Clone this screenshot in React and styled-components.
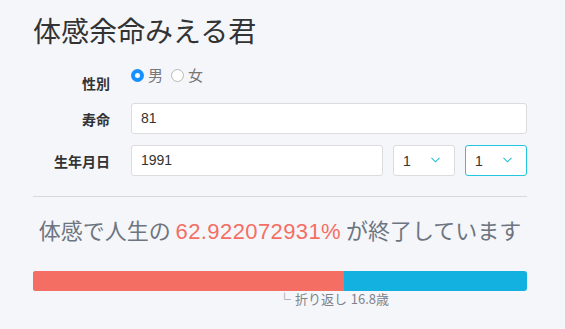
import React from "react";
import styled, { createGlobalStyle } from "styled-components";

const Global = createGlobalStyle`
  html, body { margin: 0; padding: 0; background: #f5f6fa; }
  body { font-family: "Liberation Sans", "Noto Sans CJK JP", sans-serif; color: #333; }
  * { box-sizing: border-box; }
`;

const Page = styled.div`
  width: 565px;
  padding: 12px 38px 0 33px;
`;

const Title = styled.h1`
  margin: 0;
  font-size: 28px;
  line-height: 36px;
  font-weight: 400;
  color: #333;
  font-family: "Noto Sans CJK JP", sans-serif;
`;

const Form = styled.div`
  margin-top: 18px;
  display: flex;
  flex-direction: column;
  gap: 11px;
`;

const Row = styled.div`
  display: flex;
  align-items: ${(p) => (p.$top ? "flex-start" : "stretch")};
  height: ${(p) => (p.$top ? "26px" : "31px")};
`;

const Label = styled.div`
  width: 98px;
  flex: none;
  padding-right: 21px;
  padding-top: ${(p) => (p.$top ? "8px" : "2px")};
  text-align: right;
  font-size: 14px;
  font-weight: 700;
  line-height: ${(p) => (p.$top ? "18px" : "29px")};
  color: #333;
  font-family: "Noto Sans CJK JP", sans-serif;
`;

const Radios = styled.div`
  display: flex;
  align-items: center;
  height: 18px;
  gap: 8px;
`;

const RadioItem = styled.label`
  display: flex;
  align-items: center;
  gap: 4px;
  font-size: 15px;
  line-height: 18px;
  color: #777;
  font-family: "Noto Sans CJK JP", sans-serif;
`;

const Dot = styled.span`
  flex: none;
  width: 13px;
  height: 13px;
  border-radius: 50%;
  border: ${(p) => (p.$on ? "none" : "1px solid #b8b8b8")};
  background: ${(p) => (p.$on ? "#1890ff" : "#fff")};
  display: flex;
  align-items: center;
  justify-content: center;
  &::after {
    content: "";
    width: 5px;
    height: 5px;
    border-radius: 50%;
    background: #fff;
    display: ${(p) => (p.$on ? "block" : "none")};
  }
`;

const Fields = styled.div`
  flex: 1;
  display: flex;
  gap: 10px;
`;

const Input = styled.div`
  flex: 1;
  height: 31px;
  background: #fff;
  border: 1px solid #dcdcdf;
  border-radius: 3px;
  padding: 0 9px;
  font-size: 14px;
  line-height: 29px;
  color: #333;
`;

const Select = styled.div`
  width: 62px;
  flex: none;
  height: 31px;
  background: #fff;
  border: 1px solid ${(p) => (p.$focus ? "#22c6e0" : "#dcdcdf")};
  border-radius: 3px;
  padding: 0 0 0 9px;
  display: flex;
  align-items: center;
  font-size: 14px;
  color: #333;
`;

const SelectValue = styled.span`
  flex: 1;
`;

const Chevron = styled.svg`
  width: 9px;
  height: 6px;
  margin-right: 14px;
  margin-top: -2px;
`;

const Divider = styled.hr`
  margin: 20px 0 0;
  border: none;
  border-top: 1px solid #d8d9dd;
`;

const Result = styled.p`
  margin: 17px 0 0;
  text-align: center;
  font-size: 22px;
  line-height: 30px;
  color: #6d7580;
  font-family: "Noto Sans CJK JP", sans-serif;
  white-space: nowrap;
`;

const Num = styled.span`
  color: #f46e63;
  letter-spacing: 0.4px;
  font-family: "Liberation Sans", "Noto Sans CJK JP", sans-serif;
`;

const Bar = styled.div`
  margin-top: 24px;
  height: 20px;
  border-radius: 3px;
  overflow: hidden;
  display: flex;
  background: #12b1e0;
`;

const Fill = styled.div`
  background: #f46e63;
  height: 100%;
`;

const Note = styled.div`
  padding-left: calc(50% - 2px);
  font-size: 13px;
  line-height: 16px;
  word-spacing: 1px;
  color: #7d848c;
  font-family: "Noto Sans CJK JP", sans-serif;
  white-space: nowrap;
`;

const ChevronIcon = () => (
  <Chevron viewBox="0 0 9 6">
    <path d="M0.5 0.8 L4.5 4.8 L8.5 0.8" fill="none" stroke="#22c1dc" strokeWidth="1.1" />
  </Chevron>
);

export default function App() {
  const pct = 62.922072931;
  return (
    <>
      <Global />
      <Page>
        <Title>体感余命みえる君</Title>
        <Form>
          <Row $top>
            <Label $top>性別</Label>
            <Radios>
              <RadioItem><Dot $on />男</RadioItem>
              <RadioItem><Dot />女</RadioItem>
            </Radios>
          </Row>
          <Row>
            <Label>寿命</Label>
            <Fields>
              <Input>81</Input>
            </Fields>
          </Row>
          <Row>
            <Label>生年月日</Label>
            <Fields>
              <Input>1991</Input>
              <Select><SelectValue>1</SelectValue><ChevronIcon /></Select>
              <Select $focus><SelectValue>1</SelectValue><ChevronIcon /></Select>
            </Fields>
          </Row>
        </Form>
        <Divider />
        <Result>
          体感で人生の <Num>{pct}%</Num> が終了しています
        </Result>
        <Bar>
          <Fill style={{ width: `${pct}%` }} />
        </Bar>
        <Note>└ 折り返し 16.8歳</Note>
      </Page>
    </>
  );
}
